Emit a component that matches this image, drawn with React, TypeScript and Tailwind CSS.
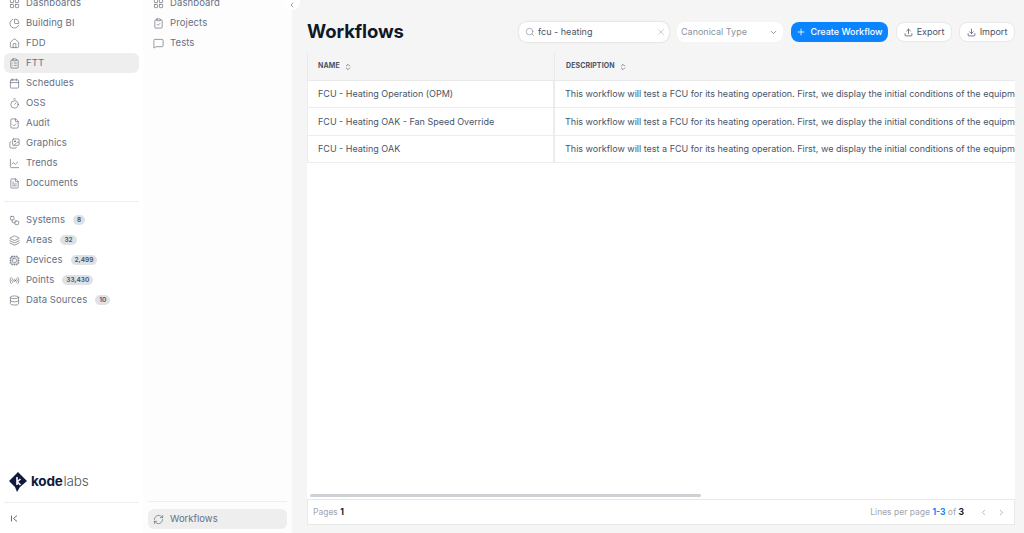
import React from "react";
import { ChevronLeft, ChevronRight, ChevronDown, ChevronsUpDown, Plus, Upload, Download, Search, X, LayoutGrid, ChartPie, House, ClipboardList, Calendar, Timer, FileCheck, Images, ChartLine, FileText, Workflow, Layers, Cpu, Radio, Database, ClipboardCheck, MessageSquare, RefreshCw } from "lucide-react";

type Item = { label: string; icon: React.ElementType; active?: boolean; badge?: string };

const top: Item[] = [
  { label: "Dashboards", icon: LayoutGrid },
  { label: "Building BI", icon: ChartPie },
  { label: "FDD", icon: House },
  { label: "FTT", icon: ClipboardList, active: true },
  { label: "Schedules", icon: Calendar },
  { label: "OSS", icon: Timer },
  { label: "Audit", icon: FileCheck },
  { label: "Graphics", icon: Images },
  { label: "Trends", icon: ChartLine },
  { label: "Documents", icon: FileText },
];
const lower: Item[] = [
  { label: "Systems", icon: Workflow, badge: "8" },
  { label: "Areas", icon: Layers, badge: "32" },
  { label: "Devices", icon: Cpu, badge: "2,499" },
  { label: "Points", icon: Radio, badge: "33,430" },
  { label: "Data Sources", icon: Database, badge: "10" },
];
const sub: Item[] = [
  { label: "Dashboard", icon: LayoutGrid },
  { label: "Projects", icon: ClipboardCheck },
  { label: "Tests", icon: MessageSquare },
];
const rows = ["FCU - Heating Operation (OPM)", "FCU - Heating OAK - Fan Speed Override", "FCU - Heating OAK"];
const desc = "This workflow will test a FCU for its heating operation. First, we display the initial conditions of the equipment, then we override the setpoints and verify the response of the unit.";

function NavRow({ item }: { item: Item }) {
  const I = item.icon;
  return (
    <div className={`flex h-[20px] items-center gap-[6px] rounded-md pl-[5px] text-[9.5px] text-[#667085] ${item.active ? "bg-[#eeeeee]" : ""}`}>
      <I size={11} strokeWidth={1.4} className="shrink-0 text-[#5c6470]" />
      <span className="whitespace-nowrap tracking-[0.1px]">{item.label}</span>
      {item.badge && <span className="ml-[2px] rounded-full bg-[#dfe1e5] px-[4px] text-[6.5px] leading-[10px] font-semibold text-[#475467]">{item.badge}</span>}
    </div>
  );
}

export default function App() {
  return (
    <div className="flex h-[533px] w-[1024px] overflow-hidden bg-[#f5f5f5] font-['Inter','Liberation_Sans',sans-serif]">
      <aside className="flex w-[143px] shrink-0 flex-col bg-white px-[4px]">
        <div className="-mt-[7px] flex flex-col">
          {top.map((i) => <NavRow key={i.label} item={i} />)}
        </div>
        <div className="my-[8px] h-px bg-[#eeeeee]" />
        <div className="flex flex-col">
          {lower.map((i) => <NavRow key={i.label} item={i} />)}
        </div>
        <div className="mt-auto flex items-center gap-[3px] pb-[9px] pl-[4px]">
          <svg width="20" height="22" viewBox="0 0 20 22">
            <path d="M10 1 L19 10 L12 16 L9 21 L7 16 L1 10 Z" fill="#101a3c" />
            <path d="M9 6 V14 M9 11 L12.5 8 M9.5 11 L12.5 14" stroke="#fff" strokeWidth="1.6" fill="none" />
          </svg>
          <span className="text-[13.5px] leading-none font-bold tracking-[-0.2px] text-[#101a3c]">kode</span>
          <span className="-ml-[2px] text-[13.5px] leading-none font-light tracking-[-0.2px] text-[#475467]">labs</span>
        </div>
        <div className="h-px bg-[#eeeeee]" />
        <div className="flex h-[30px] items-center pl-[6px] text-[#667085]">
          <svg width="9" height="9" viewBox="0 0 9 9" fill="none" stroke="currentColor" strokeWidth="1">
            <path d="M1.5 1.5V7.5M7 1.5L3.5 4.5L7 7.5" />
          </svg>
        </div>
      </aside>

      <aside className="relative flex w-[149px] shrink-0 flex-col bg-[#fdfdfd] px-[5px]">
        <div className="-mt-[7px] flex flex-col">
          {sub.map((i) => <NavRow key={i.label} item={i} />)}
        </div>
        <div className="mt-auto h-px bg-[#eeeeee]" />
        <div className="mt-[7px] mb-[4px] flex h-[20px] items-center gap-[6px] rounded-md bg-[#eeeeee] pl-[5px] text-[9.5px] text-[#667085]">
          <RefreshCw size={11} strokeWidth={1.4} className="text-[#5c6470]" />
          <span>Workflows</span>
        </div>
        <div className="absolute top-[-6px] right-[-8px] flex h-[16px] w-[16px] items-center justify-center rounded-full bg-white">
          <ChevronLeft size={8} className="mt-[6px] text-[#667085]" />
        </div>
      </aside>

      <main className="flex min-w-0 flex-1 flex-col pt-[21px] pr-[9px] pb-[8px] pl-[15px]">
        <div className="flex h-[22px] items-center">
          <h1 className="text-[18.5px] font-bold tracking-[-0.1px] text-[#101828]">Workflows</h1>
          <div className="ml-auto flex items-center">
            <div className="flex h-[20px] w-[150px] items-center rounded-lg bg-white pr-[3px] pl-[6px] shadow-[0_0_2px_rgba(0,0,0,0.2)]">
              <Search size={10} strokeWidth={1.2} className="text-[#667085]" />
              <span className="ml-[3px] text-[9px] text-[#475467]">fcu - heating</span>
              <X size={10} strokeWidth={1.2} className="ml-auto text-[#98a2b3]" />
            </div>
            <div className="ml-[8px] flex h-[20px] w-[106px] items-center rounded-lg bg-white pr-[5px] pl-[4px] text-[9px] text-[#8a93a0]">
              <span>Canonical Type</span>
              <ChevronDown size={9} className="ml-auto text-[#667085]" />
            </div>
            <button className="ml-[8px] flex h-[20px] w-[97px] items-center justify-center gap-[4px] rounded-lg bg-[#0a84ff] text-[9px] font-medium text-white">
              <Plus size={10} />Create Workflow
            </button>
            <button className="ml-[8px] flex h-[20px] w-[56px] items-center justify-center gap-[4px] rounded-lg border border-[#e8e8e8] bg-white text-[9px] text-[#475467]">
              <Upload size={9} />Export
            </button>
            <button className="ml-[7px] flex h-[20px] w-[56px] items-center justify-center gap-[4px] rounded-lg border border-[#e8e8e8] bg-white text-[9px] text-[#475467]">
              <Download size={9} />Import
            </button>
          </div>
        </div>

        <div className="mt-[10px] flex min-h-0 flex-1 flex-col overflow-hidden bg-white">
          <div className="flex h-[28px] shrink-0 items-center border-b border-[#e9e9e9] bg-[#f5f5f5] text-[7px] font-bold tracking-[0.1px] text-[#475467]">
            <div className="flex h-full w-[248px] shrink-0 items-center gap-[4px] border-r border-l border-[#e9e9e9] pl-[10px]">
              NAME <ChevronsUpDown size={8} strokeWidth={2} />
            </div>
            <div className="flex h-full items-center gap-[4px] pl-[11px]">
              DESCRIPTION <ChevronsUpDown size={8} strokeWidth={2} />
            </div>
          </div>
          {rows.map((r) => (
            <div key={r} className="flex h-[27.3px] shrink-0 items-center border-b border-[#ececec] text-[9px] text-[#475467]">
              <div className="flex h-full w-[248px] shrink-0 items-center border-r-2 border-l border-[#ececec] pl-[10px] whitespace-nowrap">{r}</div>
              <div className="pl-[10px] whitespace-nowrap">{desc}</div>
            </div>
          ))}
          <div className="mt-auto mb-[2px] ml-[3px] h-[3px] w-[391px] shrink-0 rounded-full bg-[#cfd1d6]" />
        </div>

        <div className="flex h-[26px] shrink-0 items-center border border-[#e9e9e9] bg-white pr-[8px] pl-[5px] text-[8.5px] text-[#a0a6b0]">
          <span>Pages <b className="text-[#101828]">1</b></span>
          <span className="ml-auto">Lines per page <b className="text-[#0a84ff]">1-3</b> of <b className="text-[#101828]">3</b></span>
          <ChevronLeft size={9} className="ml-[15px] text-[#98a2b3]" />
          <ChevronRight size={9} className="ml-[9px] text-[#98a2b3]" />
        </div>
      </main>
    </div>
  );
}
